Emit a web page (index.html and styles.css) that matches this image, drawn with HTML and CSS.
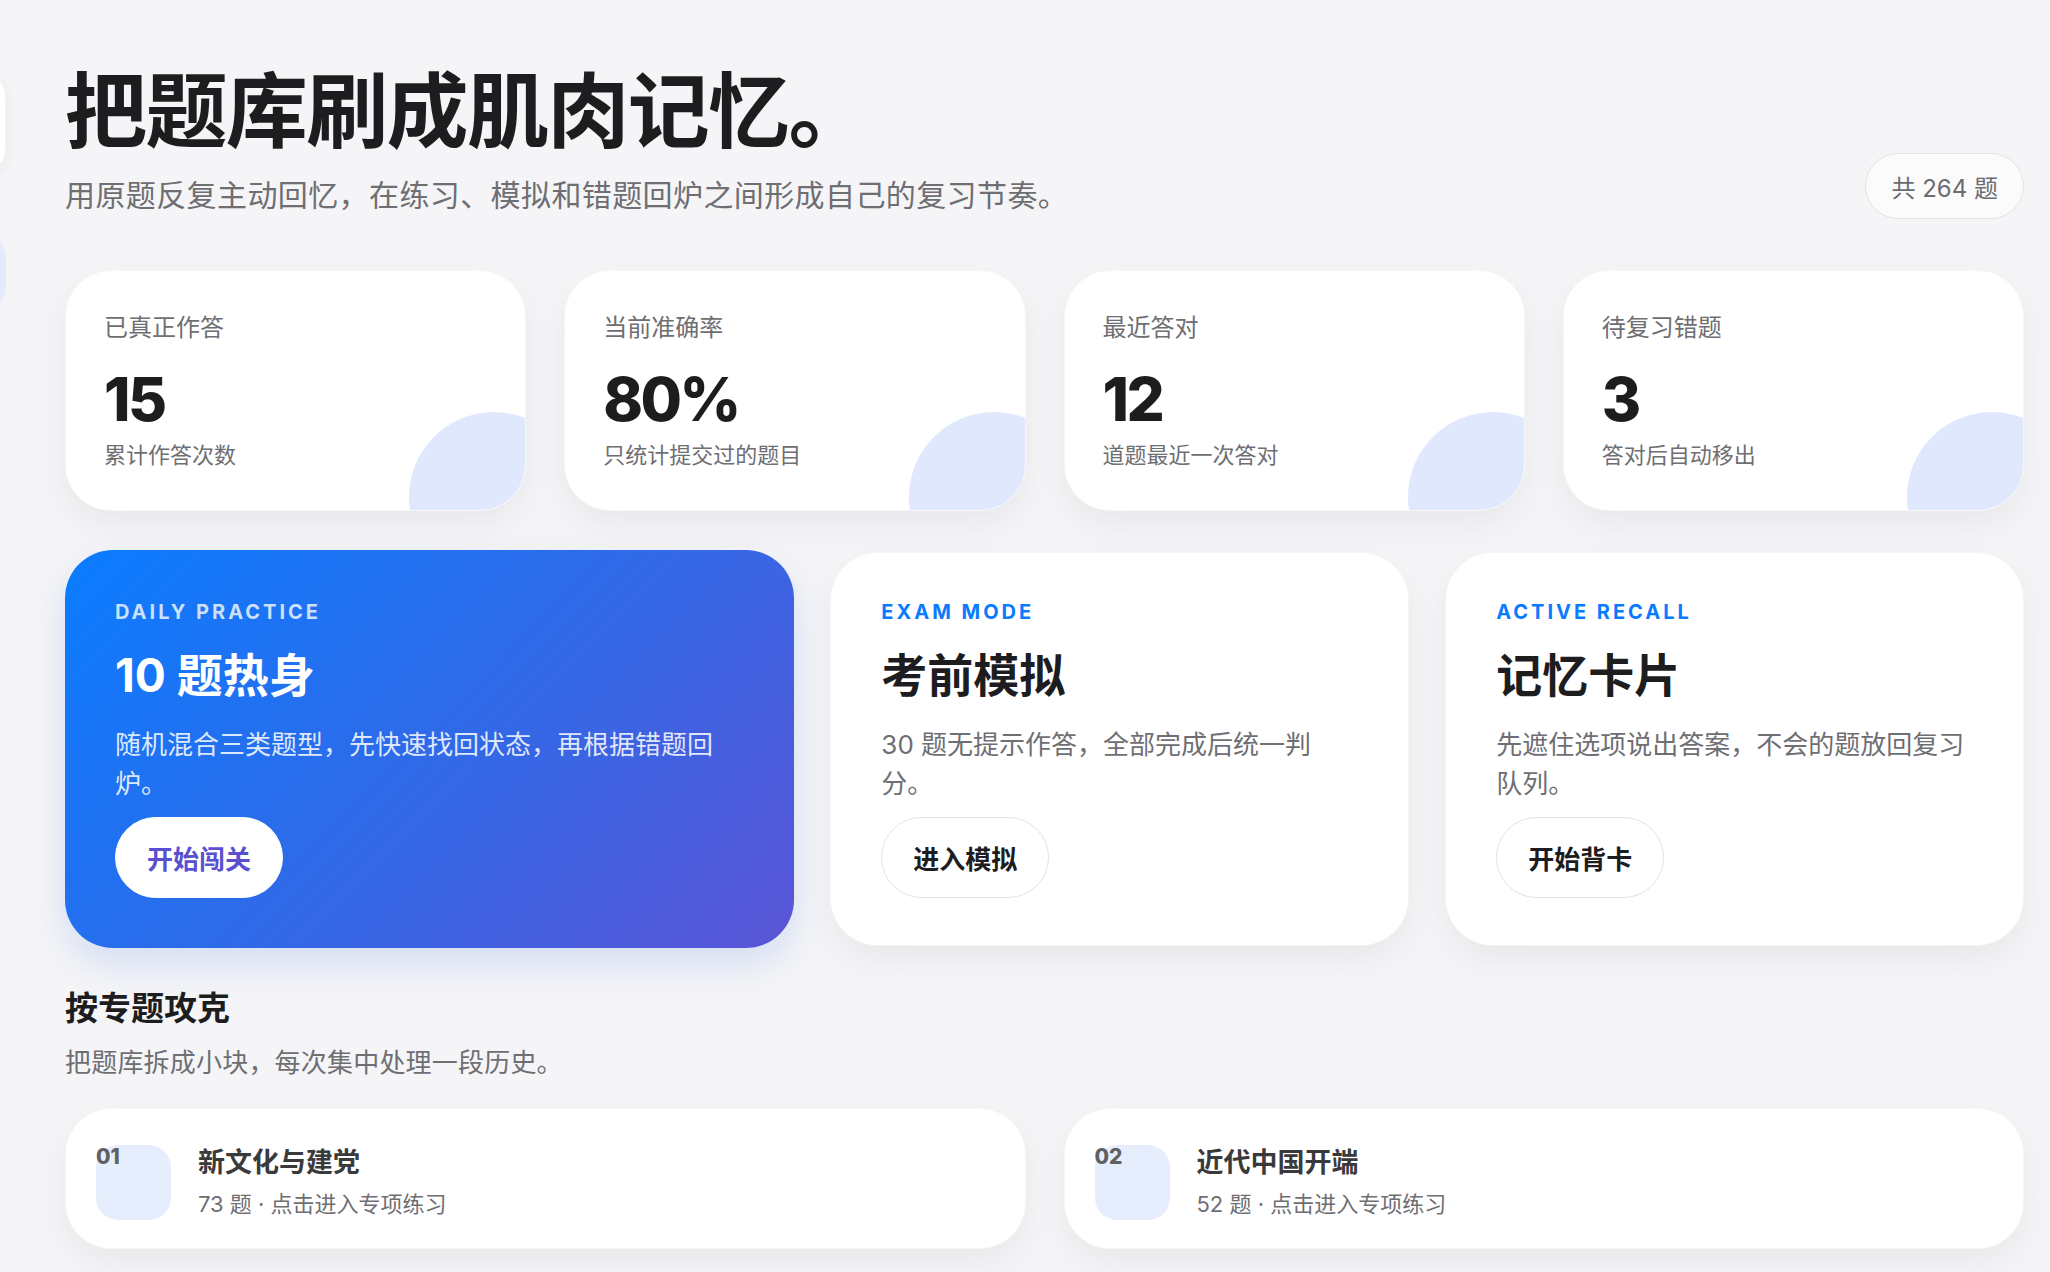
FILE: index.html
```html
<!DOCTYPE html>
<html lang="zh-CN">
<head>
<meta charset="utf-8">
<title>题库练习</title>
<link rel="stylesheet" href="styles.css">
</head>
<body>
<div class="app">
  <aside class="sidebar">
    <div class="side-card"></div>
    <div class="side-pill"></div>
  </aside>
  <main class="main">
    <header class="hero">
      <div class="hero-text">
        <h1 class="hero-title">把题库刷成肌肉记忆。</h1>
        <p class="hero-sub">用原题反复主动回忆，在练习、模拟和错题回炉之间形成自己的复习节奏。</p>
      </div>
      <span class="badge">共 264 题</span>
    </header>

    <section class="stats">
      <div class="stat">
        <div class="stat-label">已真正作答</div>
        <div class="stat-value">15</div>
        <div class="stat-note">累计作答次数</div>
        <span class="stat-blob"></span>
      </div>
      <div class="stat">
        <div class="stat-label">当前准确率</div>
        <div class="stat-value">80%</div>
        <div class="stat-note">只统计提交过的题目</div>
        <span class="stat-blob"></span>
      </div>
      <div class="stat">
        <div class="stat-label">最近答对</div>
        <div class="stat-value">12</div>
        <div class="stat-note">道题最近一次答对</div>
        <span class="stat-blob"></span>
      </div>
      <div class="stat">
        <div class="stat-label">待复习错题</div>
        <div class="stat-value">3</div>
        <div class="stat-note">答对后自动移出</div>
        <span class="stat-blob"></span>
      </div>
    </section>

    <section class="modes">
      <div class="mode mode-primary">
        <div class="mode-kicker">DAILY PRACTICE</div>
        <h2 class="mode-title">10 题热身</h2>
        <p class="mode-desc">随机混合三类题型，先快速找回状态，再根据错题回炉。</p>
        <button class="mode-btn">开始闯关</button>
      </div>
      <div class="mode">
        <div class="mode-kicker">EXAM MODE</div>
        <h2 class="mode-title">考前模拟</h2>
        <p class="mode-desc">30 题无提示作答，全部完成后统一判分。</p>
        <button class="mode-btn">进入模拟</button>
      </div>
      <div class="mode">
        <div class="mode-kicker">ACTIVE RECALL</div>
        <h2 class="mode-title">记忆卡片</h2>
        <p class="mode-desc">先遮住选项说出答案，不会的题放回复习队列。</p>
        <button class="mode-btn">开始背卡</button>
      </div>
    </section>

    <section class="topics-head">
      <h2 class="section-title">按专题攻克</h2>
      <p class="section-sub">把题库拆成小块，每次集中处理一段历史。</p>
    </section>

    <section class="topics">
      <div class="topic">
        <div class="topic-num">01</div>
        <div class="topic-text">
          <div class="topic-title">新文化与建党</div>
          <div class="topic-meta">73 题 · 点击进入专项练习</div>
        </div>
      </div>
      <div class="topic">
        <div class="topic-num">02</div>
        <div class="topic-text">
          <div class="topic-title">近代中国开端</div>
          <div class="topic-meta">52 题 · 点击进入专项练习</div>
        </div>
      </div>
    </section>
  </main>
</div>
</body>
</html>
```

FILE: styles.css
```css
* { box-sizing: border-box; }

html, body {
  margin: 0;
  padding: 0;
}

body {
  background: #f5f5f7;
  font-family: "Inter", "Noto Sans CJK SC", sans-serif;
  color: #1d1d1f;
  overflow: hidden;
}

.app {
  display: flex;
  align-items: flex-start;
  min-height: 1272px;
}

/* sidebar, mostly off-screen */
.sidebar {
  flex: 0 0 260px;
  margin-left: -254px;
  padding-top: 72px;
  display: flex;
  flex-direction: column;
}

.side-card {
  height: 101px;
  background: #ffffff;
  border-radius: 24px;
  box-shadow: 0 4px 16px rgba(0, 0, 0, 0.05);
  border: 1px solid rgba(0, 0, 0, 0.04);
}

.side-pill {
  height: 70px;
  margin-top: 64px;
  background: #e3ebfd;
  border-radius: 20px;
}

.main {
  flex: 1;
  min-width: 0;
  padding: 65px 26px 0 59px;
}

/* hero */
.hero {
  display: flex;
  align-items: flex-end;
  justify-content: space-between;
}

.hero-title {
  margin: 0;
  font-size: 82px;
  line-height: 94px;
  font-weight: 700;
  letter-spacing: -1.6px;
  color: #1d1d1f;
}

.hero-sub {
  margin: 14px 0 0;
  font-size: 30px;
  line-height: 45px;
  letter-spacing: 0.4px;
  color: #6e6e73;
}

.badge {
  display: inline-flex;
  align-items: center;
  height: 66px;
  padding: 0 25px;
  border-radius: 33px;
  border: 1.5px solid #e3e3e8;
  background: #fbfbfc;
  color: #6b6b70;
  font-size: 24px;
  margin-bottom: -1px;
}

/* stats */
.stats {
  margin-top: 52px;
  display: grid;
  grid-template-columns: repeat(4, 1fr);
  gap: 38px;
}

.stat {
  position: relative;
  overflow: hidden;
  background: #ffffff;
  border-radius: 46px;
  padding: 40px 38px 39px;
  border: 1px solid rgba(0, 0, 0, 0.035);
  box-shadow: 0 14px 34px rgba(0, 0, 0, 0.055);
}

.stat-label {
  position: relative;
  font-size: 24px;
  line-height: 34px;
  color: #6e6e73;
}

.stat-value {
  position: relative;
  margin-top: 24px;
  font-size: 60px;
  line-height: 60px;
  font-weight: 800;
  letter-spacing: -2.5px;
  color: #1d1d1f;
}

.stat-note {
  position: relative;
  margin-top: 11px;
  font-size: 22px;
  line-height: 31px;
  color: #6e6e73;
}

.stat-blob {
  position: absolute;
  width: 170px;
  height: 170px;
  right: -54px;
  bottom: -72px;
  border-radius: 50%;
  background: #dfe8fd;
}

/* modes */
.modes {
  margin-top: 39px;
  display: grid;
  grid-template-columns: 1.26fr 1fr 1fr;
  gap: 36px;
  align-items: start;
}

.mode {
  background: #ffffff;
  border-radius: 48px;
  padding: 47px 50px 47px;
  border: 1px solid rgba(0, 0, 0, 0.035);
  box-shadow: 0 14px 34px rgba(0, 0, 0, 0.055);
  margin-top: 2px;
}

.mode-primary {
  margin-top: 0;
  padding: 50px;
  border: none;
  background: linear-gradient(135deg, #0a7cff 0%, #2f6ae8 50%, #5a55d6 100%);
  box-shadow: 0 16px 36px rgba(40, 100, 230, 0.16);
}

.mode-kicker {
  font-size: 20px;
  line-height: 24px;
  font-weight: 700;
  letter-spacing: 0.15em;
  color: #0a7aff;
}

.mode-primary .mode-kicker {
  color: rgba(255, 255, 255, 0.78);
}

.mode-title {
  margin: 24px 0 0;
  font-size: 46px;
  line-height: 55px;
  font-weight: 700;
  color: #1d1d1f;
}

.mode-primary .mode-title {
  color: #ffffff;
}

.mode-desc {
  margin: 22px 0 0;
  font-size: 26px;
  line-height: 39px;
  color: #6e6e73;
}

.mode-primary .mode-desc {
  color: rgba(255, 255, 255, 0.86);
}

.mode-btn {
  display: inline-flex;
  align-items: center;
  justify-content: center;
  margin-top: 14px;
  height: 81px;
  padding: 0 31px;
  border-radius: 41px;
  border: 1.5px solid #e3e3e8;
  background: #ffffff;
  font-family: "Inter", "Noto Sans CJK SC", sans-serif;
  font-size: 26px;
  font-weight: 700;
  color: #1d1d1f;
}

.mode-primary .mode-btn {
  border-color: #ffffff;
  color: #5a4fd0;
}

/* topics */
.topics-head {
  margin-top: 39px;
}

.section-title {
  margin: 0;
  font-size: 33px;
  line-height: 43px;
  font-weight: 700;
  color: #1d1d1f;
}

.section-sub {
  margin: 15px 0 0;
  font-size: 26px;
  line-height: 36px;
  letter-spacing: 0.2px;
  color: #6e6e73;
}

.topics {
  margin-top: 27px;
  display: grid;
  grid-template-columns: 1fr 1fr;
  gap: 38px;
}

.topic {
  display: flex;
  align-items: flex-start;
  gap: 27px;
  background: #ffffff;
  border-radius: 46px;
  padding: 36px 30px 28px;
  border: 1px solid rgba(0, 0, 0, 0.035);
  box-shadow: 0 14px 34px rgba(0, 0, 0, 0.055);
}

.topic-num {
  flex: 0 0 75px;
  height: 75px;
  border-radius: 22px;
  background: #e6eefe;
  font-size: 21px;
  line-height: 21px;
  font-weight: 800;
  color: #5f5f64;
  padding-top: 1px;
}

.topic-text {
  display: flex;
  flex-direction: column;
  gap: 9px;
}

.topic-title {
  font-size: 27px;
  line-height: 35px;
  font-weight: 700;
  color: #3a3a3c;
}

.topic-meta {
  font-size: 22px;
  line-height: 31px;
  color: #6e6e73;
}
```
